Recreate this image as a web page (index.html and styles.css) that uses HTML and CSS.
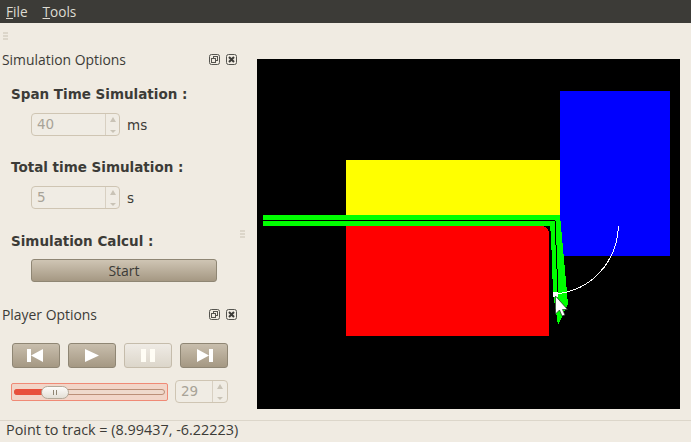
FILE: index.html
```html
<!DOCTYPE html>
<html lang="en">
<head>
  <meta charset="UTF-8" />
  <title>Simulation</title>
  <link rel="stylesheet" href="styles.css">
</head>
<body>
  <div class="menubar">
    <span><u>F</u>ile</span>
    <span><u>T</u>ools</span>
  </div>

  <div class="main">
    <div class="docks">
      <div class="grip grip-top"><i></i><i></i><i></i></div>

      <div class="dock-title sim-title">
        <span>Simulation Options</span>
        <div class="dock-icons">
          <svg width="11" height="11" viewBox="0 0 11 11"><rect x="0.5" y="0.5" width="10" height="10" rx="2" fill="none" stroke="#55544f"/><rect x="4.5" y="2.5" width="4" height="4" fill="none" stroke="#55544f"/><rect x="2.5" y="4.5" width="4" height="4" fill="#f0ebe2" stroke="#55544f"/></svg>
          <svg width="11" height="11" viewBox="0 0 11 11"><rect x="0.5" y="0.5" width="10" height="10" rx="2" fill="none" stroke="#55544f"/><path d="M3 3l5 5M8 3l-5 5" stroke="#3c3b37" stroke-width="2"/></svg>
        </div>
      </div>

      <div class="group-label span-label">Span Time Simulation :</div>
      <div class="field-row">
        <div class="spin">
          <span class="spin-value">40</span>
          <span class="spin-arrows"><b class="up"></b><b class="down"></b></span>
        </div>
        <span>ms</span>
      </div>

      <div class="group-label">Total time Simulation :</div>
      <div class="field-row">
        <div class="spin">
          <span class="spin-value">5</span>
          <span class="spin-arrows"><b class="up"></b><b class="down"></b></span>
        </div>
        <span>s</span>
      </div>

      <div class="group-label calc-label">Simulation Calcul :</div>
      <button class="start-btn">Start</button>

      <div class="dock-title player-title">
        <span>Player Options</span>
        <div class="dock-icons">
          <svg width="11" height="11" viewBox="0 0 11 11"><rect x="0.5" y="0.5" width="10" height="10" rx="2" fill="none" stroke="#55544f"/><rect x="4.5" y="2.5" width="4" height="4" fill="none" stroke="#55544f"/><rect x="2.5" y="4.5" width="4" height="4" fill="#f0ebe2" stroke="#55544f"/></svg>
          <svg width="11" height="11" viewBox="0 0 11 11"><rect x="0.5" y="0.5" width="10" height="10" rx="2" fill="none" stroke="#55544f"/><path d="M3 3l5 5M8 3l-5 5" stroke="#3c3b37" stroke-width="2"/></svg>
        </div>
      </div>

      <div class="player-buttons">
        <button class="player-btn"><svg class="icon-prev" width="16" height="13" viewBox="0 0 16 13"><path d="M0 0h4v13H0zM4 6.5L16 0v13z" fill="#fff"/></svg></button>
        <button class="player-btn"><svg width="14" height="13" viewBox="0 0 14 13"><path d="M0 0l14 6.5L0 13z" fill="#fff"/></svg></button>
        <button class="player-btn is-off"><svg width="14" height="13" viewBox="0 0 14 13"><path d="M0 0h5v13H0zM9 0h5v13H9z" fill="#fffdf5"/></svg></button>
        <button class="player-btn"><svg class="icon-next" width="16" height="13" viewBox="0 0 16 13"><path d="M12 0h4v13h-4zM12 6.5L0 13V0z" fill="#fff"/></svg></button>
      </div>

      <div class="player-slider">
        <div class="slider">
          <div class="groove"><div class="groove-fill"></div></div>
          <div class="handle"><i></i><i></i></div>
        </div>
        <div class="spin spin-small">
          <span class="spin-value">29</span>
          <span class="spin-arrows"><b class="up"></b><b class="down"></b></span>
        </div>
      </div>

      <div class="grip grip-side"><i></i><i></i><i></i></div>
    </div>

    <svg class="scene" width="423" height="350" viewBox="257 59 423 350" shape-rendering="crispEdges">
      <rect x="346" y="160" width="214" height="55" fill="#ffff00"/>
      <rect x="560" y="91" width="110" height="165" fill="#0000ff"/>
      <path d="M346 226H541Q549 226 549 235V336H346Z" fill="#ff0000"/>
      <path d="M263 215H560L568 304L558 325L553 293L551 235L550 226H263Z" fill="#00ff00"/>
      <path d="M263 220.5H555L558 292" fill="none" stroke="#000" stroke-width="1"/>
      <path d="M618.5 226C617 262 592 290 556 294" fill="none" stroke="#fff" stroke-width="1"/>
      <rect x="553" y="292" width="5" height="5" fill="#fff"/>
      <path d="M555.5 296V314L559.5 310L562 316L565 315L562.5 309.5H567.5Z" fill="#fff" stroke="#222" stroke-width="0.7" shape-rendering="auto"/>
    </svg>
  </div>

  <div class="statusbar">Point to track = (8.99437, -6.22223)</div>
</body>
</html>
```

FILE: styles.css
```css
* {
  box-sizing: border-box;
}

body {
  margin: 0;
  width: 691px;
  height: 442px;
  overflow: hidden;
  display: flex;
  flex-direction: column;
  background: #f0ebe2;
  color: #3c3b37;
  font-family: "DejaVu Sans", sans-serif;
  font-size: 13.5px;
}

.menubar {
  height: 23px;
  flex: none;
  display: flex;
  align-items: center;
  gap: 15px;
  padding-left: 6px;
  background: #3c3b37;
  color: #dfdbd2;
  font-family: "Open Sans", sans-serif;
  font-size: 13.6px;
}

.main {
  flex: 1;
  display: flex;
  min-height: 0;
}

.docks {
  width: 257px;
  flex: none;
  position: relative;
  display: flex;
  flex-direction: column;
}

.grip {
  display: flex;
  flex-direction: column;
  gap: 1px;
  width: 5px;
}

.grip i {
  display: block;
  height: 2px;
  background: #dcd6ca;
}

.grip-top {
  margin: 9px 0 0 3px;
}

.grip-side {
  position: absolute;
  left: 240px;
  top: 207px;
}

.dock-title {
  display: flex;
  align-items: center;
  justify-content: space-between;
  padding: 0 20px 0 2px;
  height: 20px;
  font-family: "Open Sans", sans-serif;
  font-size: 13.9px;
}

.sim-title {
  margin-top: 9px;
}

.player-title {
  margin-top: 22px;
}

.dock-icons {
  display: flex;
  gap: 6px;
}

.group-label {
  padding-left: 11px;
  font-weight: bold;
  line-height: 16px;
  margin-top: 23px;
}

.span-label {
  margin-top: 17px;
}

.calc-label {
  margin-top: 24px;
}

.field-row {
  display: flex;
  align-items: center;
  gap: 7px;
  margin: 11px 0 0 31px;
  font-size: 13.5px;
  color: #3c3b37;
}

.spin {
  width: 89px;
  height: 23px;
  display: flex;
  border: 1px solid #cfc5b3;
  border-radius: 4px;
  background: #f0ece4;
  color: #a8a397;
  font-size: 13.5px;
}

.spin-value {
  flex: 1;
  padding-left: 5px;
  line-height: 21px;
}

.spin-arrows {
  width: 14px;
  border-left: 1px solid #d8d0c2;
  display: flex;
  flex-direction: column;
  align-items: center;
  justify-content: space-between;
  padding: 3px 0 2px;
}

.spin-arrows b {
  width: 0;
  height: 0;
  border-left: 3.5px solid transparent;
  border-right: 3.5px solid transparent;
}

.spin-arrows .up {
  border-bottom: 5px solid #c9c3b6;
}

.spin-arrows .down {
  border-top: 3px solid #c9c3b6;
}

.start-btn {
  width: 186px;
  height: 23px;
  margin: 10px 0 0 31px;
  padding: 0;
  border: 1px solid #8f8674;
  border-radius: 3px;
  background: linear-gradient(#cfc5b4, #a59883);
  color: #3c3b37;
  font-family: "Open Sans", sans-serif;
  font-size: 14px;
}

.player-buttons {
  display: flex;
  gap: 8px;
  margin: 19px 0 0 12px;
}

.player-btn {
  width: 48px;
  height: 25px;
  padding: 0;
  display: flex;
  align-items: center;
  justify-content: center;
  border: 1px solid #8f8674;
  border-radius: 3px;
  background: linear-gradient(#c8bead, #a59883);
}

.player-btn.is-off {
  border-color: #c5bcab;
  background: linear-gradient(#efebe5, #dcd6ca);
}

.icon-prev {
  margin-right: 2px;
}

.icon-next {
  margin-left: 2px;
}

.player-slider {
  display: flex;
  align-items: center;
  gap: 7px;
  margin: 12px 0 0 11px;
}

.slider {
  width: 157px;
  height: 18px;
  position: relative;
  padding: 5px 2px;
  border: 1px solid #f08a76;
  border-radius: 2px;
  background: #f2d5c8;
}

.groove {
  height: 6px;
  border: 1px solid #bb8f78;
  border-radius: 3px;
  background: #efd9cc;
}

.groove-fill {
  width: 28px;
  height: 6px;
  margin: -1px;
  border-radius: 3px 0 0 3px;
  background: #e8503c;
}

.handle {
  position: absolute;
  left: 29px;
  top: 2px;
  width: 28px;
  height: 13px;
  display: flex;
  align-items: center;
  justify-content: center;
  gap: 2px;
  border: 1px solid #b3a999;
  border-radius: 7px;
  background: linear-gradient(#fdfcfa, #e3dfd6);
}

.handle i {
  width: 1px;
  height: 5px;
  background: #8f8674;
}

.spin-small {
  width: 53px;
}

.spin-small .spin-arrows {
  width: 15px;
}

.scene {
  flex: none;
  margin-top: 36px;
  background: #000;
}

.statusbar {
  height: 22px;
  flex: none;
  padding-left: 6px;
  border-top: 1px solid #dcd6ca;
  line-height: 18px;
  font-family: "Open Sans", sans-serif;
  font-size: 14.4px;
}
```
